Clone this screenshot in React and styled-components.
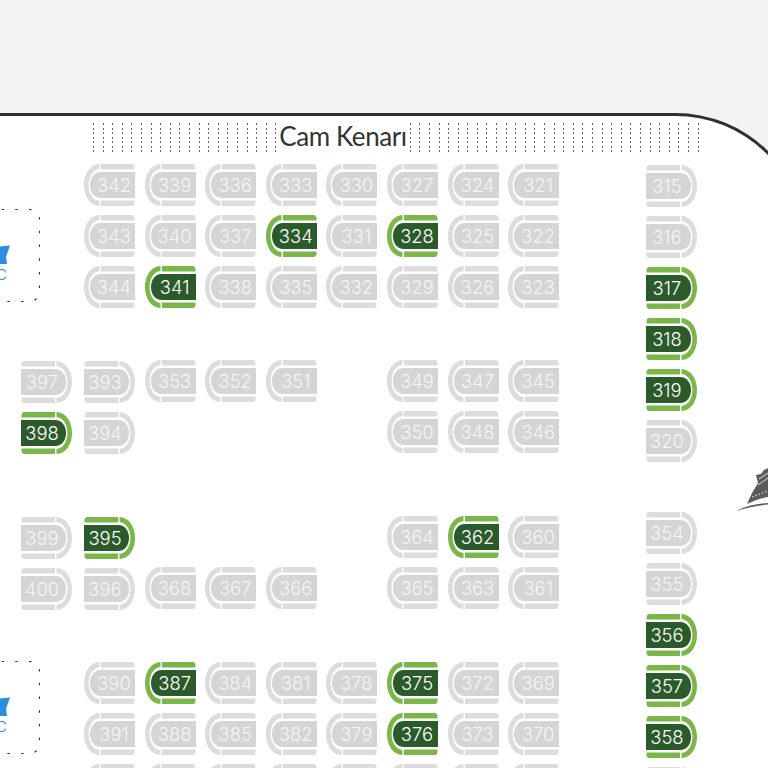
import React from "react";
import styled, { createGlobalStyle } from "styled-components";

const GlobalStyle = createGlobalStyle`
  html, body {
    margin: 0;
    padding: 0;
    height: 768px;
    overflow: hidden;
    background: #f3f3f3;
    font-family: "Inter", "Liberation Sans", sans-serif;
  }
`;

const Page = styled.div`
  position: relative;
  width: 768px;
  height: 768px;
  padding-top: 113px;
  box-sizing: border-box;
  overflow: hidden;
`;

const Deck = styled.div`
  box-sizing: border-box;
  width: 815px;
  height: 800px;
  margin-left: -10px;
  padding: 7px 0 0 0;
  background: #fff;
  border: 3px solid #303030;
  border-top-right-radius: 130px 126px;
`;

const WindowStrip = styled.div`
  display: flex;
  align-items: center;
  height: 30px;
  margin: 0 0 11px 100px;
`;

const WindowLines = styled.div`
  display: flex;
  gap: 8.6px;
  height: 100%;
`;

const WindowLine = styled.span`
  width: 1px;
  height: 100%;
  background: repeating-linear-gradient(to bottom, #666 0 2px, transparent 2px 4.5px);
`;

const StripLabel = styled.span`
  margin: -5px 3px 0 3px;
  font-family: "Lato", sans-serif;
  font-size: 26px;
  letter-spacing: -0.4px;
  line-height: 30px;
  color: #333;
  white-space: nowrap;
`;

const Floor = styled.div`
  display: flex;
  margin-left: 28px;
`;

const Cabin = styled.div`
  display: grid;
  grid-template-columns: 63px repeat(8, 60.6px);
  grid-template-rows: 51px 51px 94px 51px 105px 51px 95px 51px 51px 51px;
`;

const SideColumn = styled.div`
  display: grid;
  grid-template-rows: repeat(6, 51px) 41px repeat(6, 51px);
  margin-left: 77.2px;
`;

const SeatBox = styled.div`
  position: relative;
  display: flex;
  align-items: center;
  justify-content: center;
  box-sizing: border-box;
  width: 51px;
  height: 42px;
  margin-top: ${(p) => (p.$right ? "1px" : "0")};
  padding: ${(p) => (p.$right ? "0 9px 0 0" : "0 0 0 9px")};
  grid-column: ${(p) => p.$col};
  grid-row: ${(p) => p.$row};
  font-size: 18.4px;
  font-weight: 300;
  color: ${(p) => (p.$taken ? "#fff" : "#f4f4f4")};
`;

const SeatShape = styled.svg`
  position: absolute;
  inset: 0;
  width: 51px;
  height: 42px;
  transform: ${(p) => (p.$right ? "scaleX(-1)" : "none")};
`;

const SeatNumber = styled.span`
  position: relative;
`;

function Seat({ n, col, row, right, taken }) {
  const trim = taken ? "#7ab648" : "#dcdcdc";
  const body = taken ? "#2b5a2b" : "#d5d5d5";
  return (
    <SeatBox $col={col} $row={row} $right={right} $taken={taken}>
      <SeatShape $right={right} viewBox="0 0 51 42">
        <path
          fill={trim}
          d="M15.500 0C6 0.500 0 9.500 0 21C0 32.500 6 41.500 15.500 42V37C9 36.500 4.600 29.500 4.600 21C4.600 12.500 9 5.500 15.500 5Z"
        />
        <path fill={trim} d="M17 0H47.500Q50.500 0 50.500 3.500V5.500H17Z" />
        <path fill={trim} d="M17 36.500H50.500V38.500Q50.500 42 47.500 42H17Z" />
        <path fill={body} d="M51 8V34H17C10 34 6 28 6 21C6 14 10 8 17 8Z" />
      </SeatShape>
      <SeatNumber>{n}</SeatNumber>
    </SeatBox>
  );
}

const WcBox = styled.div`
  position: relative;
  box-sizing: border-box;
  display: flex;
  flex-direction: column;
  align-items: flex-end;
  justify-content: center;
  grid-column: 1;
  grid-row: ${(p) => p.$row};
  width: 90px;
  height: 93px;
  margin: ${(p) => p.$top}px 0 0 -71px;
  padding: 17px 33px 0 0;
`;

const WcOutline = styled.svg`
  position: absolute;
  inset: 0;
  width: 90px;
  height: 93px;
`;

const WcIcon = styled.svg`
  width: 20px;
  height: 19px;
  margin-right: -3px;
`;

const WcLabel = styled.span`
  font-size: 15px;
  font-weight: 300;
  line-height: 16px;
  margin-top: 3px;
  color: #2b8fe0;
`;

function Wc({ row, top }) {
  return (
    <WcBox $row={row} $top={top}>
      <WcOutline viewBox="0 0 90 93">
        <rect
          x="0.5"
          y="0.5"
          width="89"
          height="92"
          rx="10"
          fill="none"
          stroke="#333"
          strokeWidth="1.200"
          strokeDasharray="2.500 11.200"
        />
      </WcOutline>
      <WcIcon viewBox="0 0 20 19">
        <path fill="#2b8fe0" d="M0 0.500L10 1.500L20 0.500L17 9L16 12L17 19H3L4 12L3 9Z" />
      </WcIcon>
      <WcLabel>WC</WcLabel>
    </WcBox>
  );
}

const ShipLogo = styled.svg`
  position: absolute;
  right: 0;
  top: 466px;
  width: 32px;
  height: 46px;
`;

const cabinSeats = [
  { row: 1, start: 2, nums: [342, 339, 336, 333, 330, 327, 324, 321] },
  { row: 2, start: 2, nums: [343, 340, 337, 334, 331, 328, 325, 322] },
  { row: 3, start: 2, nums: [344, 341, 338, 335, 332, 329, 326, 323] },
  { row: 4, start: 1, right: [397, 393], nums: [353, 352, 351, null, 349, 347, 345] },
  { row: 5, start: 1, right: [398, 394], nums: [null, null, null, null, 350, 348, 346] },
  { row: 6, start: 1, right: [399, 395], nums: [null, null, null, null, 364, 362, 360] },
  { row: 7, start: 1, right: [400, 396], nums: [368, 367, 366, null, 365, 363, 361] },
  { row: 8, start: 2, nums: [390, 387, 384, 381, 378, 375, 372, 369] },
  { row: 9, start: 2, nums: [391, 388, 385, 382, 379, 376, 373, 370] },
  { row: 10, start: 2, nums: [392, 389, 386, 383, 380, 377, 374, 371] },
];

const sideSeats = [
  [315, 1], [316, 2], [317, 3], [318, 4], [319, 5], [320, 6],
  [354, 8], [355, 9], [356, 10], [357, 11], [358, 12], [359, 13],
];

const taken = new Set([334, 328, 341, 398, 395, 362, 387, 375, 376, 317, 318, 319, 356, 357, 358]);

function renderCabinRow({ row, start, right, nums }) {
  const seats = [];
  (right || []).forEach((n, i) => {
    seats.push(<Seat key={n} n={n} col={i + 1} row={row} right taken={taken.has(n)} />);
  });
  const first = right ? start + 2 : start;
  nums.forEach((n, i) => {
    if (n) seats.push(<Seat key={n} n={n} col={first + i} row={row} taken={taken.has(n)} />);
  });
  return seats;
}

export default function App() {
  return (
    <Page>
      <GlobalStyle />
      <Deck>
        <WindowStrip>
          <WindowLines>
            {Array.from({ length: 20 }, (_, i) => <WindowLine key={i} />)}
          </WindowLines>
          <StripLabel>Cam Kenarı</StripLabel>
          <WindowLines>
            {Array.from({ length: 31 }, (_, i) => <WindowLine key={i} />)}
          </WindowLines>
        </WindowStrip>
        <Floor>
          <Cabin>
            <Wc row="2 / 4" top={-6} />
            <Wc row="8 / 10" top={-1} />
            {cabinSeats.map(renderCabinRow)}
          </Cabin>
          <SideColumn>
            {sideSeats.map(([n, row]) => (
              <Seat key={n} n={n} col={1} row={row} right taken={taken.has(n)} />
            ))}
          </SideColumn>
        </Floor>
      </Deck>
      <ShipLogo viewBox="0 0 32 46">
        <path fill="#5c5c5c" d="M11 38L16 27L22 17L20 9L25 8L28 4L32 2V31Q20 33 11 38Z" />
        <path fill="none" stroke="#fff" strokeWidth="1" strokeDasharray="1.500 2" d="M16 31L32 25" />
        <path fill="none" stroke="#fff" strokeWidth="0.800" d="M22 19L32 12" />
        <path fill="none" stroke="#fff" strokeWidth="0.800" d="M23 13L32 7" />
        <path fill="#5c5c5c" d="M0 45Q14 38 32 37V38.500Q16 40 0 45Z" />
      </ShipLogo>
    </Page>
  );
}
